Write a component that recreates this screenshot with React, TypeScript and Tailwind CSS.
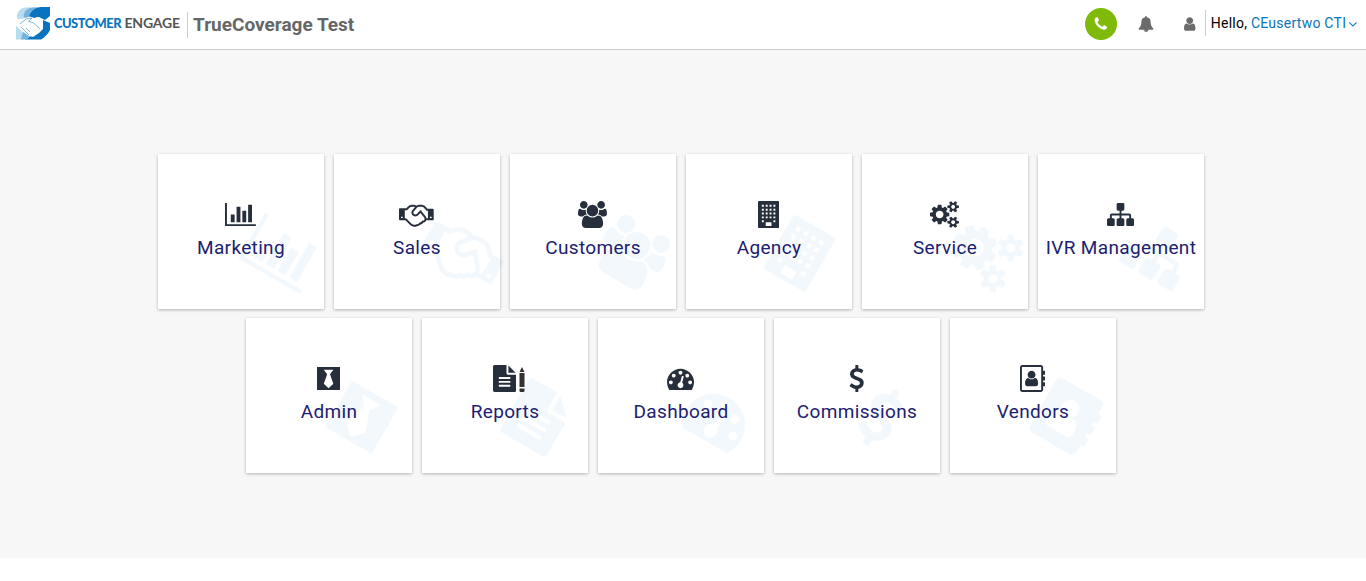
import type { ReactNode } from "react";

type Glyph = { box: string; path: string };

const g = (box: string, path: string): Glyph => ({ box, path });

const icons = {
  chart: g("0 0 2048 1792", "M640 896v512h-256v-512h256zm384-512v1024h-256v-1024h256zm1024 1152v128h-2048v-1536h128v1408h1920zm-640-896v768h-256v-768h256zm384-384v1152h-256v-1152h256z"),
  handshake: g("0 0 2304 1792", "M192 1152q40 0 56-32t0-64-56-32-56 32 0 64 56 32zm1473-58q-10-13-38.5-50t-41.5-54-38-49-42.5-53-40.5-47-45-49l-125 140q-83 94-208.5 92t-205.5-98q-57-69-56.5-158t58.5-157l177-206q-22-11-51-16.5t-47.5-6-56.5.5-49 1q-92 0-158 66l-158 158h-155v544q5 0 21-.5t22 0 19.5 2 20.5 4.5 17.5 8.5 18.5 13.5l297 292q115 111 227 111 78 0 125-47 57 20 112.5-8t72.5-85q74 6 127-44 20-18 36-45.5t14-50.5q10 10 43 10 43 0 77-21t49.5-53 12-71.5-30.5-73.5zm159 58h96v-512h-93l-157-180q-66-76-169-76h-167q-89 0-146 67l-209 243q-28 33-28 75t27 75q43 51 110 52t111-49l193-218q25-23 53.5-21.5t47 27 8.5 56.5q16 19 56 63t60 68q29 36 82.5 105.5t64.5 84.5q52 66 60 140zm288 0q40 0 56-32t0-64-56-32-56 32 0 64 56 32zm192-576v640q0 26-19 45t-45 19h-434q-27 65-82 106.5t-125 51.5q-33 48-80.5 81.5t-102.5 45.5q-42 53-104.5 81.5t-128.5 24.5q-60 34-126 39.5t-127.5-14-117-53.5-103.5-81l-287-282h-358q-26 0-45-19t-19-45v-672q0-26 19-45t45-19h421q14-14 47-48t47.5-48 44-40 50.5-37.5 51-25.5 62-19.5 68-5.5h117q99 0 181 56 82-56 181-56h167q35 0 67 6t56.5 14.5 51.5 26.5 44.5 31 43 39.5 39 41 41 45.5 41.5 48.5h355q26 0 45 19t19 45z"),
  users: g("0 0 1920 1792", "M593 896q-162 5-265 128h-134q-82 0-138-40.5t-56-118.5q0-353 124-353 6 0 43.5 21t97.5 42.5 119 21.5q67 0 133-23-5 37-5 66 0 139 81 256zm1071 637q0 120-73 189.5t-194 69.5h-874q-121 0-194-69.5t-73-189.5q0-53 3.5-103.5t14-109 26.5-108.5 43-97.5 62-81 85.5-53.5 111.5-20q10 0 43 21.5t73 48 107 48 135 21.5 135-21.5 107-48 73-48 43-21.5q61 0 111.5 20t85.5 53.5 62 81 43 97.5 26.5 108.5 14 109 3.5 103.5zm-1024-1277q0 106-75 181t-181 75-181-75-75-181 75-181 181-75 181 75 75 181zm704 384q0 159-112.5 271.5t-271.5 112.5-271.5-112.5-112.5-271.5 112.5-271.5 271.5-112.5 271.5 112.5 112.5 271.5zm576 225q0 78-56 118.5t-138 40.5h-134q-103-123-265-128 81-117 81-256 0-29-5-66 66 23 133 23 59 0 119-21.5t97.5-42.5 43.5-21q124 0 124 353zm-128-609q0 106-75 181t-181 75-181-75-75-181 75-181 181-75 181 75 75 181z"),
  building: g("0 0 1408 1792", "M64 0h1280l45 19 19 45v1664l-19 45-45 19h-1280l-45-19-19-45v-1664l19-45z M256 256v128h128v-128zM512 256v128h128v-128zM768 256v128h128v-128zM1024 256v128h128v-128zM256 512v128h128v-128zM512 512v128h128v-128zM768 512v128h128v-128zM1024 512v128h128v-128zM256 768v128h128v-128zM512 768v128h128v-128zM768 768v128h128v-128zM1024 768v128h128v-128zM256 1024v128h128v-128zM512 1024v128h128v-128zM768 1024v128h128v-128zM1024 1024v128h128v-128zM256 1280v128h128v-128zM1024 1280v128h128v-128zM512 1408v256h384v-256z"),
  cogs: g("0 0 1920 1792", "M896 896q0-106-75-181t-181-75-181 75-75 181 75 181 181 75 181-75 75-181zm768 512q0-52-38-90t-90-38-90 38-38 90q0 53 37.5 90.5t90.5 37.5 90.5-37.5 37.5-90.5zm0-1024q0-52-38-90t-90-38-90 38-38 90q0 53 37.5 90.5t90.5 37.5 90.5-37.5 37.5-90.5zm-384 421v185q0 10-7 19.5t-16 10.5l-155 24q-11 35-32 76 34 48 90 115 7 11 7 20 0 12-7 19-23 30-82.5 89.5t-78.5 59.5q-11 0-21-7l-115-90q-37 19-77 31-11 108-23 155-7 24-30 24h-186q-11 0-20-7.5t-10-17.5l-23-153q-34-10-75-31l-118 89q-7 7-20 7-11 0-21-8-144-133-144-160 0-9 7-19 10-14 41-53t47-61q-23-44-35-82l-152-24q-10-1-17-9.5t-7-19.5v-185q0-10 7-19.5t16-10.5l155-24q11-35 32-76-34-48-90-115-7-11-7-20 0-12 7-20 22-30 82-89t79-59q11 0 21 7l115 90q34-18 77-32 11-108 23-154 7-24 30-24h186q11 0 20 7.5t10 17.5l23 153q34 10 75 31l118-89q8-7 20-7 11 0 21 8 144 133 144 160 0 8-7 19-12 16-42 54t-45 60q23 48 34 82l152 23q10 2 17 10.5t7 19.5zm640 533v140q0 16-149 31-12 27-30 52 51 113 51 138 0 4-4 7-122 71-124 71-8 0-46-47t-52-68q-20 2-30 2t-30-2q-14 21-52 68t-46 47q-2 0-124-71-4-3-4-7 0-25 51-138-18-25-30-52-149-15-149-31v-140q0-16 149-31 13-29 30-52-51-113-51-138 0-4 4-7 4-2 35-20t59-34 30-16q8 0 46 46.5t52 67.5q20-2 30-2t30 2q51-71 92-112l6-2q4 0 124 70 4 3 4 7 0 25-51 138 17 23 30 52 149 15 149 31zm0-1024v140q0 16-149 31-12 27-30 52 51 113 51 138 0 4-4 7-122 71-124 71-8 0-46-47t-52-68q-20 2-30 2t-30-2q-14 21-52 68t-46 47q-2 0-124-71-4-3-4-7 0-25 51-138-18-25-30-52-149-15-149-31v-140q0-16 149-31 13-29 30-52-51-113-51-138 0-4 4-7 4-2 35-20t59-34 30-16q8 0 46 46.5t52 67.5q20-2 30-2t30 2q51-71 92-112l6-2q4 0 124 70 4 3 4 7 0 25-51 138 17 23 30 52 149 15 149 31z"),
  sitemap: g("0 0 1792 1792", "M1792 1248v320q0 40-28 68t-68 28h-320q-40 0-68-28t-28-68v-320q0-40 28-68t68-28h96v-192h-512v192h96q40 0 68 28t28 68v320q0 40-28 68t-68 28h-320q-40 0-68-28t-28-68v-320q0-40 28-68t68-28h96v-192h-512v192h96q40 0 68 28t28 68v320q0 40-28 68t-68 28h-320q-40 0-68-28t-28-68v-320q0-40 28-68t68-28h96v-192q0-52 38-90t90-38h512v-192h-96q-40 0-68-28t-28-68v-320q0-40 28-68t68-28h320q40 0 68 28t28 68v320q0 40-28 68t-68 28h-96v192h512q52 0 90 38t38 90v192h96q40 0 68 28t28 68z"),
  tie: g("0 0 1536 1792", "M0 128h1536v1536h-1536v-1536zm1085 1115l-221-631 221-297h-634l221 297-221 631 317 304z"),
  file: g("128 0 1536 1792", "M1152 512v-472q22 14 36 28l408 408q14 14 28 36h-472zm-128 32q0 40 28 68t68 28h544v1056q0 40-28 68t-68 28h-1344q-40 0-68-28t-28-68v-1600q0-40 28-68t68-28h800v544zm256 864v-64q0-14-9-23t-23-9h-704q-14 0-23 9t-9 23v64q0 14 9 23t23 9h704q14 0 23-9t9-23zm0-256v-64q0-14-9-23t-23-9h-704q-14 0-23 9t-9 23v64q0 14 9 23t23 9h704q14 0 23-9t9-23zm0-256v-64q0-14-9-23t-23-9h-704q-14 0-23 9t-9 23v64q0 14 9 23t23 9h704q14 0 23-9t9-23z"),
  gauge: g("0 0 1792 1792", "M384 1152q0-53-37.5-90.5t-90.5-37.5-90.5 37.5-37.5 90.5 37.5 90.5 90.5 37.5 90.5-37.5 37.5-90.5zm192-448q0-53-37.5-90.5t-90.5-37.5-90.5 37.5-37.5 90.5 37.5 90.5 90.5 37.5 90.5-37.5 37.5-90.5zm428 481l101-382q6-26-7.5-48.5t-38.5-29.5-48 6.5-30 39.5l-101 382q-60 5-107 43.5t-63 98.5q-20 77 20 146t117 89 146-20 89-117q16-60-6-117t-72-91zm660-33q0-53-37.5-90.5t-90.5-37.5-90.5 37.5-37.5 90.5 37.5 90.5 90.5 37.5 90.5-37.5 37.5-90.5zm-640-640q0-53-37.5-90.5t-90.5-37.5-90.5 37.5-37.5 90.5 37.5 90.5 90.5 37.5 90.5-37.5 37.5-90.5zm448 192q0-53-37.5-90.5t-90.5-37.5-90.5 37.5-37.5 90.5 37.5 90.5 90.5 37.5 90.5-37.5 37.5-90.5zm320 448q0 261-141 483-19 29-54 29h-1402q-35 0-54-29-141-221-141-483 0-182 71-348t191-286 286-191 348-71 348 71 286 191 191 286 71 348z"),
  dollar: g("384 0 1024 1792", "M1362 1185q0 153-99.5 263.5t-258.5 136.5v175q0 14-9 23t-23 9h-135q-13 0-22.5-9.5t-9.5-22.5v-175q-66-9-127.5-31t-101.5-44.5-74-48-46.5-37.5-17.5-18q-17-21-2-41l103-135q7-10 23-12 15-2 24 9l2 2q113 99 243 125 37 8 74 8 81 0 142.5-43t61.5-122q0-28-15-53t-33.5-42-58.5-37.5-66-32-80-32.5q-39-16-61.5-25t-61.5-26.5-62.5-31-56.5-35.5-53.5-42.5-43.5-49-35.5-58-21-66.5-8.5-78q0-138 98-242t255-134v-180q0-13 9.5-22.5t22.5-9.5h135q14 0 23 9t9 23v176q57 6 110.5 23t87 33.5 63.5 37.5 39 29 15 14q17 18 5 38l-81 146q-8 15-23 16-14 3-27-7-3-3-14.5-12t-39-26.5-58.5-32-74.5-26-85.5-11.5q-95 0-155 43t-60 111q0 26 8.5 48t29.5 41.5 39.5 33 56 31 60.5 27 70 27.5q53 20 81 31.5t76 35 75.5 42.5 62 50 53 63.5 31.5 76.5 13 94z"),
  bookOutline: g("64 0 1664 1792", "M1092 644q0 107-76.5 183t-183.5 76-183.5-76-76.5-183q0-108 76.5-184t183.5-76 183.5 76 76.5 184zm-48 220q46 0 82.5 17t60 47.5 39.5 67 24 81 11.5 82.5 3.5 79q0 67-39.5 118.5t-105.5 51.5h-576q-66 0-105.5-51.5t-39.5-118.5q0-48 4.5-93.5t18.5-98.5 36.5-91.5 63-64.5 93.5-26h5q7 4 32 19.5t35.5 21 33 17 37 16 35 9 39.5 4.5 39.5-4.5 35-9 37-16 33-17 35.5-21 32-19.5zm684-256q0 13-9.5 22.5t-22.5 9.5h-96v128h96q13 0 22.5 9.5t9.5 22.5v192q0 13-9.5 22.5t-22.5 9.5h-96v128h96q13 0 22.5 9.5t9.5 22.5v192q0 13-9.5 22.5t-22.5 9.5h-96v224q0 66-47 113t-113 47h-1216q-66 0-113-47t-47-113v-1472q0-66 47-113t113-47h1216q66 0 113 47t47 113v224h96q13 0 22.5 9.5t9.5 22.5v192zm-256 1024v-1472q0-13-9.5-22.5t-22.5-9.5h-1216q-13 0-22.5 9.5t-9.5 22.5v1472q0 13 9.5 22.5t22.5 9.5h1216q13 0 22.5-9.5t9.5-22.5z"),
  bookSolid: g("64 0 1664 1792", "M1092 644q0 107-76.5 183t-183.5 76-183.5-76-76.5-183q0-108 76.5-184t183.5-76 183.5 76 76.5 184zm-48 220q46 0 82.5 17t60 47.5 39.5 67 24 81 11.5 82.5 3.5 79q0 67-39.5 118.5t-105.5 51.5h-576q-66 0-105.5-51.5t-39.5-118.5q0-48 4.5-93.5t18.5-98.5 36.5-91.5 63-64.5 93.5-26h5q7 4 32 19.5t35.5 21 33 17 37 16 35 9 39.5 4.5 39.5-4.5 35-9 37-16 33-17 35.5-21 32-19.5zm684-256q0 13-9.5 22.5t-22.5 9.5h-96v128h96q13 0 22.5 9.5t9.5 22.5v192q0 13-9.5 22.5t-22.5 9.5h-96v128h96q13 0 22.5 9.5t9.5 22.5v192q0 13-9.5 22.5t-22.5 9.5h-96v224q0 66-47 113t-113 47h-1216q-66 0-113-47t-47-113v-1472q0-66 47-113t113-47h1216q66 0 113 47t47 113v224h96q13 0 22.5 9.5t9.5 22.5v192z"),
  phone: g("128 0 1536 1792", "M1600 1240q0 27-10 70.5t-21 68.5q-21 50-122 106-94 51-186 51-27 0-52.5-3.5t-57.5-12.5-47.5-14.5-55.5-20.5-49-18q-98-35-175-83-128-79-264.5-215.5t-215.5-264.5q-48-77-83-175-3-9-18-49t-20.5-55.5-14.5-47.5-12.5-57.5-3.5-52.5q0-92 51-186 56-101 106-122 25-11 68.5-21t70.5-10q14 0 21 3 18 6 53 76 11 19 30 54t35 63.5 31 53.5q3 4 17.5 25t21.5 35.5 7 28.5q0 20-28.5 50t-62 55-62 53-28.5 46q0 9 5 22.5t8.5 20.5 14 24 11.5 19q76 137 174 235t235 174q2 1 19 11.5t24 14 20.5 8.5 22.5 5q18 0 46-28.5t53-62 55-62 50-28.5q14 0 28.5 7t35.5 21.5 25 17.5q25 15 53.5 31t63.5 35 54 30q70 35 76 53 3 7 3 21z"),
  bell: g("0 0 1792 1792", "M912 1696q0-16-16-16-59 0-101.5-42.5t-42.5-101.5q0-16-16-16t-16 16q0 73 51.5 124.5t124.5 51.5q16 0 16-16zm816-288q0 52-38 90t-90 38h-448q0 106-75 181t-181 75-181-75-75-181h-448q-52 0-90-38t-38-90q50-42 91-88t85-119.5 74.5-158.5 50-206 19.5-260q0-152 117-282.5t307-158.5q-8-19-8-39 0-40 28-68t68-28 68 28 28 68q0 20-8 39 190 28 307 158.5t117 282.5q0 139 19.5 260t50 206 74.5 158.5 85 119.5 91 88z"),
  user: g("256 0 1280 1792", "M1536 1399q0 109-62.5 187t-150.5 78h-854q-88 0-150.5-78t-62.5-187q0-85 8.5-160.5t31.5-152 58.5-131 94-89 134.5-34.5q131 128 313 128t313-128q76 0 134.5 34.5t94 89 58.5 131 31.5 152 8.5 160.5zm-256-887q0 159-112.5 271.5t-271.5 112.5-271.5-112.5-112.5-271.5 112.5-271.5 271.5-112.5 271.5 112.5 112.5 271.5z"),
  angleDown: g("397 0 998 1792", "M1395 736q0 13-10 23l-466 466q-10 10-23 10t-23-10l-466-466q-10-10-10-23t10-23l50-50q10-10 23-10t23 10l393 393 393-393q10-10 23-10t23 10l50 50q10 10 10 23z"),
};

function Icon({ glyph, className }: { glyph: Glyph; className: string }) {
  return (
    <svg viewBox={glyph.box} className={className} fill="currentColor" fillRule="evenodd" aria-hidden="true">
      <path d={glyph.path} />
    </svg>
  );
}

function Pencil() {
  return (
    <svg viewBox="0 0 6 25" className="absolute top-[2px] left-full ml-[3px] h-[25px] w-[6px] text-[#333]" fill="currentColor" aria-hidden="true">
      <path d="M3 0L5.5 5H.5zM.5 6h5v14h-5zM.5 21.500h5V24q0 1-1 1h-3q-1 0-1-1z" />
    </svg>
  );
}

type Tile = { label: string; icon: Glyph; mark?: Glyph; extra?: ReactNode };

const rows: Tile[][] = [
  [
    { label: "Marketing", icon: icons.chart },
    { label: "Sales", icon: icons.handshake },
    { label: "Customers", icon: icons.users },
    { label: "Agency", icon: icons.building },
    { label: "Service", icon: icons.cogs },
    { label: "IVR Management", icon: icons.sitemap },
  ],
  [
    { label: "Admin", icon: icons.tie },
    { label: "Reports", icon: icons.file, extra: <Pencil /> },
    { label: "Dashboard", icon: icons.gauge },
    { label: "Commissions", icon: icons.dollar },
    { label: "Vendors", icon: icons.bookOutline, mark: icons.bookSolid },
  ],
];

function Card({ tile }: { tile: Tile }) {
  return (
    <a className="relative flex h-[155px] w-[166px] flex-col items-center bg-white pt-[47px] shadow-[0_1px_3px_rgba(0,0,0,0.28)]">
      <Icon
        glyph={tile.mark ?? tile.icon}
        className="absolute top-[68px] left-[89px] h-[62.5px] w-auto rotate-30 text-[#0078c8]/5"
      />
      <span className="relative mr-px flex h-[27px] items-center text-[#272f3d]">
        <Icon glyph={tile.icon} className="h-[27px] w-auto" />
        {tile.extra}
      </span>
      <span className="relative mt-[7px] text-[19px] leading-[25px] tracking-[0.34px] whitespace-nowrap text-[#1c2070]">
        {tile.label}
      </span>
    </a>
  );
}

function Logo() {
  return (
    <div className="flex h-9 w-[166px] items-start">
      <svg viewBox="0 0 35 36" className="h-9 w-[35px] shrink-0" aria-hidden="true">
        <path d="M1 9Q2 3 9 1.500H22L14 12L3 13Q0 13 1 9z" fill="#b8dcf1" />
        <path d="M8 8Q10 2 17 1.500H27L20 12L9 12Q7 11 8 8z" fill="#72b4df" />
        <path d="M14 8Q17 2 25 1H34V10L29 14L23 11L18 12L13 11z" fill="#0873be" />
        <path d="M27 14L34 17V24Q31 30 25 33.500H9L15 28L24 26z" fill="#0873be" />
        <path d="M0 20L9 28L6 33.500H0z" fill="#b8dcf1" />
        <path d="M7 26L15 30L11 33.500H5z" fill="#72b4df" />
        <path d="M2 17L9 12L14 10.500L18 12L23 11L27 15L27 23L25 25L23 27L20 29L17 31L13 30L9 27z" fill="#fff" />
        <path d="M4 18L10 13L16 12L12.500 15.500L17 16.500L24 23M5 21L13 29M10 22L14 26" fill="none" stroke="#5aa6d8" strokeWidth=".8" />
      </svg>
      <span className="mr-[-7px] ml-[3px] w-[76px] shrink-0 origin-left scale-x-[0.92] font-[Lato,sans-serif] text-[14px] leading-[34px] font-black tracking-[-0.55px] whitespace-nowrap text-[#0873be]">
        CUSTOMER
      </span>
      <span className="ml-[1.5px] w-[57px] shrink-0 font-[Lato,sans-serif] text-[14px] leading-[34px] font-bold tracking-[-0.2px] whitespace-nowrap text-[#555]">
        ENGAGE
      </span>
    </div>
  );
}

export default function App() {
  return (
    <div className="flex h-[581px] flex-col bg-white font-['Roboto',sans-serif]">
      <header className="flex h-[50px] shrink-0 items-start justify-between border-b border-[#ccc] bg-white">
        <div className="flex items-start pl-4">
          <div className="pt-[6px]">
            <Logo />
          </div>
          <div className="mt-3 ml-[5px] flex h-[26px] items-center border-l border-[#ccc] pl-[5px]">
            <h1 className="text-[19px] leading-[26px] font-bold text-[#666]">TrueCoverage Test</h1>
          </div>
        </div>
        <div className="flex items-start">
          <button className="mt-2 flex size-8 items-center justify-center rounded-full bg-[#7fba0b] text-white">
            <Icon glyph={icons.phone} className="mb-px h-[16px] w-auto" />
          </button>
          <Icon glyph={icons.bell} className="mt-4 ml-[21px] size-[16px] text-[#6b6b6b]" />
          <Icon glyph={icons.user} className="mt-4 ml-[30.5px] h-[16px] w-auto text-[#6b6b6b]" />
          <div className="mt-[10px] ml-[9px] flex h-[26px] items-center border-l border-[#ccc] pr-[9px] pl-[5px] text-[14px] tracking-[0.25px] whitespace-nowrap">
            <span className="text-black">Hello,&nbsp;</span>
            <span className="text-[#0a76b7]">CEusertwo CTI</span>
            <Icon glyph={icons.angleDown} className="mt-[2px] ml-[3px] h-[14px] w-auto text-[#0a76b7]" />
          </div>
        </div>
      </header>
      <main className="flex h-[508px] flex-col gap-[9px] bg-[#f7f7f7] pt-[104px] pr-1">
        {rows.map((row, index) => (
          <div key={index} className="flex justify-center gap-[10px]">
            {row.map((tile) => (
              <Card key={tile.label} tile={tile} />
            ))}
          </div>
        ))}
      </main>
    </div>
  );
}
